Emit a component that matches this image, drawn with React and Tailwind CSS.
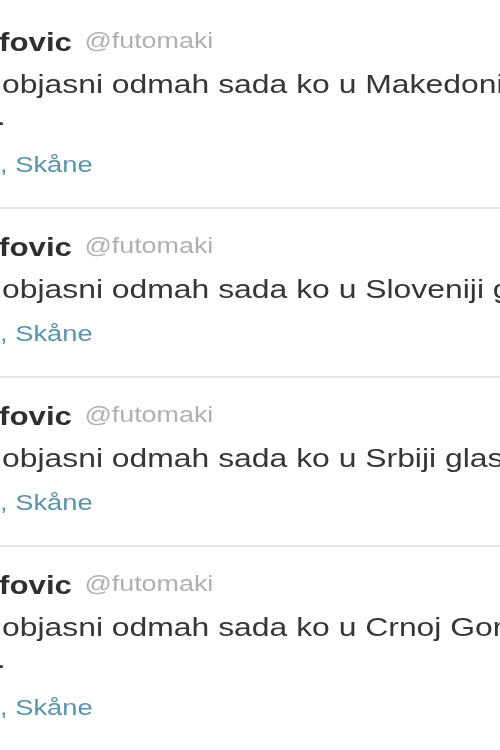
import React from "react";

const tweets = [
  { body: "objasni odmah sada ko u Makedoniji glasa", extra: true },
  { body: "objasni odmah sada ko u Sloveniji glasa", extra: false },
  { body: "objasni odmah sada ko u Srbiji glasa", extra: false },
  { body: "objasni odmah sada ko u Crnoj Gori glasa", extra: true },
];

function Tweet({ t, first }) {
  return (
    <div className={first ? "pt-[22px] pb-[23px]" : "pt-[18px] pb-[23px]"}>
      <div className="h-[40px] flex items-center origin-left scale-x-[1.25] whitespace-nowrap -ml-[1px]">
        <span className="text-[25px] font-bold text-[#2f2f2f] leading-none">fovic</span>
        <span className="ml-[10px] text-[21.5px] text-[#b0b0b0] leading-none">@futomaki</span>
      </div>
      <div className="mt-[4px] h-[36px] flex items-center origin-left scale-x-[1.275] whitespace-nowrap ml-[2px] text-[25px] text-[#363636] leading-none">
        {t.body}
      </div>
      {t.extra && (
        <div className="h-[36px] flex items-center origin-left scale-x-[1.25] -translate-y-[4px] whitespace-nowrap -ml-[3px] text-[25px] text-[#363636] leading-none">
          .
        </div>
      )}
      <div className="mt-[10px] h-[36px] flex items-center origin-left scale-x-[1.27] whitespace-nowrap text-[21.5px] text-[#5b93aa] leading-none">
        , Skåne
      </div>
    </div>
  );
}

export default function App() {
  return (
    <div className="w-[500px] h-[750px] overflow-hidden bg-white font-['Liberation_Sans',Arial,sans-serif] blur-[0.4px]">
      {tweets.map((t, i) => (
        <div key={i} className={i < tweets.length - 1 ? "border-b-2 border-[#e6e6e6]" : ""}>
          <Tweet t={t} first={i === 0} />
        </div>
      ))}
    </div>
  );
}
